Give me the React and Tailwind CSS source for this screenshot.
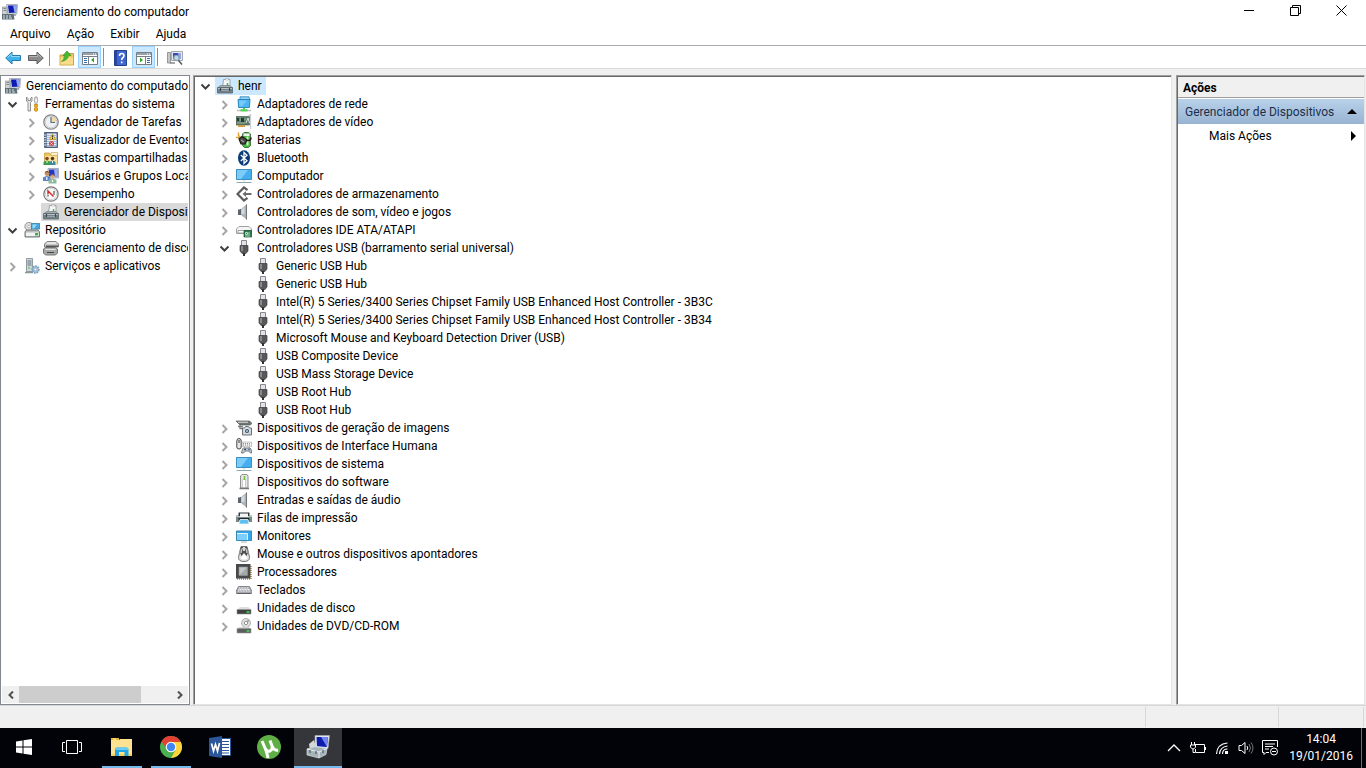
import React from 'react';
import clsx from 'clsx';

const drawings = {
  computer: (
    <>
      <path d="M4.500 .5h11l-.6 9.500L6 10.500z" fill="#d3d6dc" stroke="#8b8f98" strokeWidth=".6" />
      <path d="M6 1.500h8.500l-.5 7-7 .5z" fill="#0c1bb4" />
      <path d="M11 1.500h3.500l-.5 7-1.500.1z" fill="#93a5f4" />
      <path d="M9 10h5v2H9z" fill="#a9adb3" />
      <path d="M.5 3h4.500v8H.5z" fill="#cfd3d8" stroke="#7d848c" strokeWidth=".6" />
      <path d="M1.500 4.500h2.500M1.500 6.500h2.500" stroke="#6a7078" strokeWidth=".8" />
      <path d="M0 10h11.500l1 5.500H0z" fill="#5c7076" />
      <path d="M1 12h2m1 0h2m1 0h2M1 14h2m1 0h2m1 0h3" stroke="#d7e2e4" strokeWidth="1" />
    </>
  ),
  tools: (
    <>
      <path d="M2.500 1v4L4 6.500V15h2.500V6.500L8 5V1L6.500 2.500v2H4v-2z" fill="#e8e8e8" stroke="#777" strokeWidth=".8" />
      <path d="M11 1h2l.6 3.500-1 4h-1.200l-1-4z" fill="#f2f2f2" stroke="#888" strokeWidth=".8" />
      <path d="M10.500 8.500h3v2h-.7v1.500h.7v2.500L12 15.500l-1.500-1V12h.7v-1.500h-.7z" fill="#f7b01c" stroke="#c48608" strokeWidth=".8" />
    </>
  ),
  clock: (
    <>
      <circle cx="8" cy="8" r="7.200" fill="#eef1f3" stroke="#858585" strokeWidth="1.300" />
      <path d="M8 8V2.200A5.800 5.800 0 0 1 13.800 8z" fill="#f6d9a0" />
      <circle cx="8" cy="8" r="5.800" fill="none" stroke="#c5cbd0" strokeWidth=".9" />
      <path d="M8 3v5.500h4" fill="none" stroke="#54708c" strokeWidth="1.200" />
    </>
  ),
  events: (
    <>
      <path d="M1.500.5h13v15h-13z" fill="#5f7795" stroke="#46566d" strokeWidth=".9" />
      <path d="M4 1.500h9.500v13H4z" fill="#e3e9f5" />
      <path d="M4 3.500h9M4 5.500h9M4 7.500h9M4 9.500h9M4 11.500h9M4 13.500h9" stroke="#8fa3cc" strokeWidth=".7" />
      <path d="M.5 3h3M.5 5.500h3M.5 8h3M.5 10.500h3M.5 13h3" stroke="#d5dae0" strokeWidth="1" />
      <path d="M9.500 2l3 5.500h-6z" fill="#ffd42e" stroke="#ab8200" strokeWidth=".6" />
      <path d="M9.500 3.500v2m0 .5v1" stroke="#333" strokeWidth="1" />
      <circle cx="8.500" cy="11.500" r="2.500" fill="#d0413f" />
      <path d="M7.500 10.500l2 2m0-2l-2 2" stroke="#fff" strokeWidth=".9" />
    </>
  ),
  shared: (
    <>
      <path d="M1.500 3h5l1 1.500h7V14h-13z" fill="#efc65c" stroke="#c79c40" strokeWidth=".8" />
      <path d="M8 2.500h6.500v3H8z" fill="#fff6d8" stroke="#c79c40" strokeWidth=".6" />
      <path d="M2 6h12v8H2z" fill="#fbe29a" />
      <circle cx="4" cy="8.500" r="1.800" fill="#7d4a25" />
      <path d="M.5 15v-3q3.500-3 7 0v3z" fill="#3c9c45" />
      <circle cx="9.500" cy="8.500" r="1.800" fill="#563820" />
      <path d="M6.500 15v-3q3-3 6 0v3z" fill="#3f8d9c" />
      <path d="M4 11v2m5.500-2v2" stroke="#fff" strokeWidth="1" />
    </>
  ),
  users: (
    <>
      <path d="M5 .5h10.500v9.500H5z" fill="#d6dae4" stroke="#8990a0" strokeWidth=".7" />
      <path d="M6 1.500h8.500v7H6z" fill="#2438c0" />
      <path d="M11 1.500h3.500v7H12z" fill="#9fb0f4" />
      <circle cx="4" cy="5.500" r="2.400" fill="#c99162" />
      <path d="M1.700 5Q4 1 6.300 5L4 4z" fill="#66401d" />
      <path d="M0 13V9.500q4-3 7.500 0V13z" fill="#5784c7" />
      <circle cx="9.500" cy="8.500" r="2.200" fill="#dcae82" />
      <path d="M7.300 8q2.200-4 4.400 0l-2-1z" fill="#7b5229" />
      <path d="M5.500 15.500V12q4-2.500 8 0v3.500z" fill="#8fb8a0" />
      <path d="M3.800 9v3m5.700 0v2" stroke="#fff" strokeWidth="1.200" />
    </>
  ),
  gauge: (
    <>
      <circle cx="8" cy="8" r="7.200" fill="#fafafa" stroke="#777" strokeWidth="1.200" />
      <circle cx="8" cy="8" r="5.600" fill="none" stroke="#c4c4c4" strokeWidth=".7" />
      <path d="M5 8V5l5.500 5.500" stroke="#d22525" strokeWidth="1.400" fill="none" />
      <path d="M5 8.500v2m6-5.500v4" stroke="#333" strokeWidth="1" />
    </>
  ),
  device: (
    <>
      <path d="M6.500 1.500h6.500V9H5.500z" fill="#f5f6f6" stroke="#8d9294" strokeWidth=".8" />
      <path d="M8.500.5h3v1.500h-3z" fill="#fff" stroke="#999" strokeWidth=".5" />
      <path d="M10.500 5v3" stroke="#43b65a" strokeWidth="1.500" />
      <path d="M1 9.500L3.500 7.500h9.500L15 9.500z" fill="#a5b0b6" stroke="#737b80" strokeWidth=".7" />
      <path d="M.5 9.500h15V15H.5z" fill="#738189" stroke="#59646a" strokeWidth=".8" />
      <path d="M1 10.500h14" stroke="#b9c4ca" strokeWidth="1" />
      <path d="M3.500 10v3m9-3v3" stroke="#3d474d" strokeWidth="1.200" />
      <path d="M4 12.500h8" stroke="#99a5ab" strokeWidth="1" />
    </>
  ),
  storage: (
    <>
      <circle cx="5" cy="4.500" r="4.200" fill="#dadada" stroke="#868686" strokeWidth=".8" />
      <circle cx="5" cy="4.500" r="1.300" fill="#fff" stroke="#999" strokeWidth=".6" />
      <path d="M7.500 1.500h8.200V7H7.500z" fill="#46a9dc" stroke="#2e7da8" strokeWidth=".8" />
      <path d="M8.500 2.500H13l-3 4H8.500z" fill="#9ad9f6" />
      <path d="M1 9.500L3 8h11l1.500 1.500V15H1z" fill="#b9bdbe" stroke="#666d70" strokeWidth=".9" />
      <path d="M2 10.500h12.500v3.500H2z" fill="#f2f3f3" />
      <path d="M11 11h3v2.500h-3z" fill="#3cb43f" />
    </>
  ),
  diskManage: (
    <>
      <path d="M1.500 4L4 1.500h9L15.500 4v3h-14z" fill="#c8c8c8" stroke="#777" strokeWidth=".9" />
      <path d="M4 3h9" stroke="#fff" strokeWidth="1" />
      <path d="M3 5.500h12V7H3z" fill="#555" />
      <path d="M.5 9l2-1.500h10l2 1.500v4l-2 2h-10l-2-2z" fill="#a6a8a9" stroke="#6a6b6c" strokeWidth=".9" />
      <path d="M2.500 9.500h10" stroke="#e2e2e2" strokeWidth="1" />
      <path d="M4 12.500h7" stroke="#444" strokeWidth="1" />
    </>
  ),
  services: (
    <>
      <path d="M2.500.5h6v13h-6z" fill="#d0d7db" stroke="#87939a" strokeWidth=".9" />
      <path d="M3.500 3h4M3.500 5h4M3.500 7h4" stroke="#60757e" strokeWidth="1" />
      <path d="M4 10h2" stroke="#42b657" strokeWidth="1.200" />
      <path d="M1 14.500h8" stroke="#8a969b" strokeWidth="1.500" />
      <circle cx="11.500" cy="11.500" r="3.200" fill="#b8d4e8" stroke="#7a9fbd" strokeWidth="2" strokeDasharray="1.700 .7" />
      <circle cx="11.500" cy="11.500" r="1.300" fill="#fff" stroke="#7295b2" strokeWidth=".6" />
    </>
  ),
  network: (
    <>
      <path d="M4 .8h9l.8 3.200H4z" fill="#8fd3f8" stroke="#2a82b5" strokeWidth=".8" />
      <path d="M2 3.500h12l-.6 8H2.600z" fill="#4db5f2" stroke="#1f7fb8" strokeWidth=".9" />
      <path d="M3 4.500h8l-5 6H3.400z" fill="#74caf9" />
      <path d="M7 11.500h2v2H7z" fill="#4bc34d" />
      <path d="M1 14.500h14" stroke="#b9bec0" strokeWidth="1.500" />
      <path d="M4.500 14.300h7" stroke="#4ed64b" strokeWidth="2.200" />
    </>
  ),
  gpu: (
    <>
      <path d="M0 2.500h13.500v8.500H0z" fill="#5c7d6b" stroke="#48614f" strokeWidth=".7" />
      <path d="M1 4h2.500v3H1zM5 4h3v4H5z" fill="#203d30" />
      <path d="M10 9l2-5 1.500 5" fill="none" stroke="#d7e2da" strokeWidth="1" />
      <path d="M1 9h8M9 4v2M4 3.500v4" stroke="#a9c2aa" strokeWidth=".8" />
      <path d="M2 11h7v2H2z" fill="#d99a44" />
      <path d="M12.500 2l2-1.500V15" fill="none" stroke="#c9cdcf" strokeWidth="1.300" />
    </>
  ),
  battery: (
    <>
      <path d="M6.500 2l1.500-1.500h4.500L14.500 2v11.500l-2 2H8.500l-2-2z" fill="#44b53e" stroke="#3c6b3a" strokeWidth=".9" />
      <path d="M7.500 1.500h6V4h-6z" fill="#eef2ee" />
      <path d="M10.500 4.500h2v9h-2z" fill="#c9f5bd" />
      <path d="M2.500.5v3l2 2M0 5.500h4" fill="none" stroke="#e2a32c" strokeWidth="1.500" />
      <path d="M3 7l3-2.500 5 3.500L9 12H5z" fill="#4a4d49" stroke="#1b1d1b" strokeWidth="1.200" />
      <path d="M10 8.500h3q2-.5 2-3" fill="none" stroke="#222" strokeWidth="1.500" />
      <path d="M5 8l3 2" stroke="#b5b8b4" strokeWidth="1" />
    </>
  ),
  bluetooth: (
    <>
      <ellipse cx="8" cy="8" rx="6" ry="7.800" fill="#073c78" />
      <path d="M4.800 5l6.200 5.700L8 13.500v-11L11 5.300 4.800 11" fill="none" stroke="#fff" strokeWidth="1.300" />
    </>
  ),
  monitor: (
    <>
      <path d="M.5 1.500h15v10H.5z" fill="#45aef0" stroke="#3b8fbd" strokeWidth="1" />
      <path d="M1 2h11l-7 9H1z" fill="#7cccf9" />
      <path d="M6.500 12h3v1.500h-3z" fill="#e3e8ea" />
      <path d="M.5 14.500h15" stroke="#8ba7b5" strokeWidth="1" />
    </>
  ),
  storageCtrl: (
    <>
      <path d="M11.500 4.200L8 1.500 1.500 8 8 14.500l3.500-2.700" fill="none" stroke="#5b5b5b" strokeWidth="2.200" />
      <path d="M6.500 8L10 5v2h5.500v2H10v2z" fill="#6c6c6c" />
    </>
  ),
  speaker: (
    <>
      <path d="M2 5h3v6H2z" fill="#5d646a" />
      <path d="M5 5l6-5v16l-6-5z" fill="#aeb5ba" />
      <path d="M5.500 5.500L8.500 3v7H5.500z" fill="#d5dade" />
      <path d="M10.500.5v15" stroke="#6d757b" strokeWidth="1" />
      <path d="M2 5.500h2" stroke="#a5abb0" strokeWidth="1" />
    </>
  ),
  ide: (
    <>
      <path d="M.5 7L3 4.500h10L15.500 7v4.500H.5z" fill="#f4f4f4" stroke="#a1a1a1" strokeWidth="1" />
      <path d="M2 8.500h12V11H2z" fill="#fff" stroke="#8d8d8d" strokeWidth=".8" />
      <path d="M8 8.500h7.500V15H8z" fill="#2c7a50" stroke="#174b31" strokeWidth=".7" />
      <path d="M9.500 10.500v2h2v-2zM13 10v3M9 14h5" fill="none" stroke="#c4e6c4" strokeWidth=".9" />
    </>
  ),
  usb: (
    <>
      <path d="M5.500.5h5V6h-5z" fill="#e3e3e8" stroke="#878792" strokeWidth="1" />
      <path d="M4 5.500h8V11l-2 2.500H6L4 11z" fill="#58585a" stroke="#404043" strokeWidth=".7" />
      <path d="M5 6h2v5H5z" fill="#8b8b8d" />
      <path d="M8 13v3" stroke="#333" strokeWidth="2" />
    </>
  ),
  imaging: (
    <>
      <path d="M0 1h13.500L16 3.500 14 5H4z" fill="#6f7575" stroke="#4f5656" strokeWidth=".7" />
      <path d="M2 2.200h10" stroke="#dfe3e3" strokeWidth="1" />
      <path d="M2 6.500h5M4 5v3.500h3" fill="none" stroke="#7b8282" strokeWidth="1.300" />
      <path d="M6.500 8h2l1-1.500h3l1 1.500h2v7h-9z" fill="#cfd4d7" stroke="#4f575c" strokeWidth=".8" />
      <circle cx="11" cy="11" r="2.600" fill="#41596c" stroke="#fff" strokeWidth=".8" />
      <circle cx="11" cy="11" r="1" fill="#a8d2ea" />
    </>
  ),
  hid: (
    <>
      <path d="M.8 3q0-2.500 2.200-2.500T5.200 3v6q0 2-2.200 2T.8 9z" fill="#e7e7e7" stroke="#444" strokeWidth="1" />
      <path d="M3 2v3" stroke="#333" strokeWidth="1" />
      <path d="M6 4h9.500v4.500H6z" fill="#eee" stroke="#aaa" strokeWidth=".6" />
      <path d="M7 5.500h8M7 7h8" stroke="#777" strokeWidth=".8" strokeDasharray="1 1" />
      <path d="M5.500 15l1-4q1-2 3-1h2.500q2-1 3 1l.7 4q-1 1-3-2H9.500q-2 3-4 2z" fill="#c4cbd3" stroke="#595f65" strokeWidth=".8" />
      <path d="M8 11.500h2m-1-1v2" stroke="#333" strokeWidth=".8" />
      <circle cx="13" cy="11.500" r="1" fill="#3e72b2" />
    </>
  ),
  software: (
    <>
      <path d="M4.500 2L6 .5h5L12 2v12H4.500z" fill="#e6e6e6" stroke="#909090" strokeWidth="1" />
      <path d="M6.500 5.500v8h3v-8z" fill="#fff" stroke="#bababa" strokeWidth=".7" />
      <path d="M8.500 2v4" stroke="#6fc24a" strokeWidth="1.500" />
      <path d="M3.500 14.500h9.500" stroke="#777" strokeWidth="1.500" />
    </>
  ),
  printer: (
    <>
      <path d="M2.500 2.500h11V7h-11z" fill="#2d3438" />
      <path d="M0 5.500h2.500V7h11V5.500H16V12H0z" fill="#7d868a" />
      <path d="M0 6.500h16" stroke="#b9c1c5" strokeWidth="1" />
      <path d="M4 3.500h8V7H4z" fill="#f2f4f5" />
      <path d="M2.500 8h11v2.500h-11z" fill="#1e2b33" />
      <path d="M4 9.500h8l1 4.500H3z" fill="#5cbff0" stroke="#e8f6fd" strokeWidth=".8" />
      <path d="M13.500 8.500H15" stroke="#38c754" strokeWidth="1.200" />
    </>
  ),
  display: (
    <>
      <path d="M.5 3h15v9.500H.5z" fill="#38a6ea" stroke="#3588b5" strokeWidth="1" />
      <path d="M1 6h10v6H1z" fill="#7dcefa" />
      <path d="M1 5.500h10.500V12" fill="none" stroke="#e3f5ff" strokeWidth="1" />
      <path d="M5 14h6" stroke="#c6cdd1" strokeWidth="1.500" />
    </>
  ),
  mouse: (
    <>
      <path d="M5 .5h6l1.500 6 1 5q0 4-5.500 4t-5.500-4l1-5z" fill="#e2e2e2" stroke="#666" strokeWidth=".9" />
      <path d="M5 1h6l1 6-1.500 3-2.500-3-2.500 3L4 7z" fill="#4d4f52" />
      <path d="M6.500 2q-1.500 3-1.500 5m4.500-5q1.500 3 1.500 5" fill="none" stroke="#d0d0d0" strokeWidth="1.200" />
      <path d="M8 1v4" stroke="#fff" strokeWidth="1.500" />
      <path d="M4.500 12l3.500-4 3.500 4q-3 3.500-7 0z" fill="#fff" />
    </>
  ),
  cpu: (
    <>
      <path d="M1 15h14V2" fill="none" stroke="#d69d2f" strokeWidth="2" strokeDasharray="1 1" />
      <path d="M0 0h14.500v14.500H0z" fill="#48494b" />
      <path d="M3 3h8.500v8.500H3z" fill="#c4c6c7" stroke="#8b8d8e" strokeWidth=".6" />
      <path d="M3.500 11L11 3.500V11z" fill="#a5a8aa" />
    </>
  ),
  keyboard: (
    <>
      <path d="M2.500 4.500h11l2.500 5-1 2H1l-1-2z" fill="#a6a8b0" stroke="#7d7f85" strokeWidth=".9" />
      <path d="M3 6h10M2.500 7.500h11.500M2 9h12" stroke="#fff" strokeWidth="1" strokeDasharray="1 .6" />
      <path d="M.5 11.500h15" stroke="#5f6166" strokeWidth="1" />
    </>
  ),
  disk: (
    <>
      <path d="M1.500 9.500L4 7h8.500L15 9.500z" fill="#dedede" />
      <path d="M1 9.500h14v4.500H1z" fill="#3f4142" stroke="#999" strokeWidth=".6" />
      <path d="M10.500 12h3" stroke="#42df50" strokeWidth="1.500" />
    </>
  ),
  dvd: (
    <>
      <circle cx="10" cy="5" r="4.500" fill="#dedede" stroke="#a2a2a2" strokeWidth=".8" />
      <path d="M10 5L12 1l2 2z" fill="#aaa" />
      <circle cx="10" cy="5" r="1.700" fill="#fff" stroke="#8a8a8a" strokeWidth=".9" />
      <path d="M1 11l2.500-2h9L15 11z" fill="#d4d4d4" />
      <path d="M1 10.500h14v4.500H1z" fill="#5d5f60" stroke="#999" strokeWidth=".6" />
      <path d="M10.500 13h3" stroke="#42df50" strokeWidth="1.500" />
    </>
  ),
  back: (
    <>
      <path d="M.7 8L7 2v3.500h8.500v5H7V14z" fill="#3db3ec" stroke="#2479ae" strokeWidth="1" />
      <path d="M2.500 7.500L6.300 4v2.500H15" fill="none" stroke="#9bdcf8" strokeWidth=".9" />
    </>
  ),
  forward: (
    <>
      <path d="M15.300 8L9 2v3.500H.5v5H9V14z" fill="#8b8b8b" stroke="#5d5d5d" strokeWidth="1" />
      <path d="M1 6.500h8.700V4l3.800 3.500" fill="none" stroke="#b9b9b9" strokeWidth=".9" />
    </>
  ),
  folderUp: (
    <>
      <path d="M1 5h6l1-1.500h6.500V15H1z" fill="#edc766" stroke="#c79c3d" strokeWidth=".9" />
      <path d="M1.500 7.500h12.500v7H1.500z" fill="#f9dd8b" />
      <path d="M2.500 11.500q3-2 3-6H4L8 1l4 4.500H9.500q-1 5-7 6z" fill="#49b934" stroke="#278d18" strokeWidth=".6" />
    </>
  ),
  paneLeft: (
    <>
      <path d="M.5 2.500h15v12H.5z" fill="#fff" stroke="#777f86" strokeWidth="1" />
      <path d="M1 3h14v2H1z" fill="#9aa3aa" />
      <path d="M11 4h1m1 0h1" stroke="#fff" />
      <path d="M1 6.500h14M6.500 6v8" stroke="#777f86" strokeWidth="1" />
      <path d="M2 8.500h3M2 10.500h3M2 12.500h3" stroke="#3469a8" strokeWidth="1" />
      <path d="M12 7.500v5L9 10z" fill="#35a52d" />
    </>
  ),
  paneRight: (
    <>
      <path d="M.5 2.500h15v12H.5z" fill="#fff" stroke="#777f86" strokeWidth="1" />
      <path d="M1 3h14v2H1z" fill="#9aa3aa" />
      <path d="M11 4h1m1 0h1" stroke="#fff" />
      <path d="M1 6.500h14M9.500 6v8" stroke="#777f86" strokeWidth="1" />
      <path d="M11 8.500h3M11 10.500h3M11 12.500h3" stroke="#3469a8" strokeWidth="1" />
      <path d="M4 7.500v5L7 10z" fill="#35a52d" />
    </>
  ),
  help: (
    <>
      <path d="M1.500.5h12v15h-12z" fill="#3f66ce" stroke="#22418f" strokeWidth="1" />
      <path d="M2 1h2v14H2z" fill="#2947a0" />
      <path d="M6.500 6q0-2.500 2.200-2.500T11 5.500Q11 7 9.500 8q-.8.500-.8 2M8.700 11.500v1.800" fill="none" stroke="#fff" strokeWidth="1.600" />
    </>
  ),
  scan: (
    <>
      <path d="M4.500 1.500h11v9h-11z" fill="#e7e9ed" stroke="#99a0a9" strokeWidth=".9" />
      <path d="M6 3h8v6H6z" fill="#354abd" />
      <path d="M11 3h3v6h-2z" fill="#97a6ee" />
      <path d="M.5 2.500h3V13h-3z" fill="#c4c8cc" stroke="#777" strokeWidth=".7" />
      <path d="M3 13h5" stroke="#888" strokeWidth="1.500" />
      <circle cx="9.500" cy="8" r="2.700" fill="#b5d9f2" stroke="#8b99a3" strokeWidth="1.100" />
      <path d="M11.500 10.500l3.500 4" stroke="#555e66" strokeWidth="1.700" />
    </>
  ),
};

const Icon = ({ name }) => (
  <svg viewBox="0 0 16 16" className="size-4 shrink-0" aria-hidden="true">
    {drawings[name]}
  </svg>
);

const Chevron = ({ open }) => (
  <svg viewBox="0 0 19 18" className="h-[18px] w-[19px]" fill="none" strokeWidth="2" aria-hidden="true">
    {open ? <path d="M5.500 7.500l4 4 4-4" stroke="#404040" /> : <path d="M7.500 6l4 4-4 4" stroke="#a6a6a6" />}
  </svg>
);

const leftTree = [
  { depth: 0, icon: 'computer', label: 'Gerenciamento do computador', leaf: true },
  { depth: 0, icon: 'tools', label: 'Ferramentas do sistema', open: true },
  { depth: 1, icon: 'clock', label: 'Agendador de Tarefas' },
  { depth: 1, icon: 'events', label: 'Visualizador de Eventos' },
  { depth: 1, icon: 'shared', label: 'Pastas compartilhadas' },
  { depth: 1, icon: 'users', label: 'Usuários e Grupos Locais' },
  { depth: 1, icon: 'gauge', label: 'Desempenho' },
  { depth: 2, icon: 'device', label: 'Gerenciador de Dispositivos', leaf: true, selected: 'bg-[#d9d9d9]' },
  { depth: 0, icon: 'storage', label: 'Repositório', open: true },
  { depth: 2, icon: 'diskManage', label: 'Gerenciamento de disco', leaf: true },
  { depth: 0, icon: 'services', label: 'Serviços e aplicativos' },
];

const usbDevices = [
  'Generic USB Hub',
  'Generic USB Hub',
  'Intel(R) 5 Series/3400 Series Chipset Family USB Enhanced Host Controller - 3B3C',
  'Intel(R) 5 Series/3400 Series Chipset Family USB Enhanced Host Controller - 3B34',
  'Microsoft Mouse and Keyboard Detection Driver (USB)',
  'USB Composite Device',
  'USB Mass Storage Device',
  'USB Root Hub',
  'USB Root Hub',
];

const deviceTree = [
  { depth: 0, icon: 'device', label: 'henr', open: true, selected: 'bg-[#cce8ff]' },
  { depth: 1, icon: 'network', label: 'Adaptadores de rede' },
  { depth: 1, icon: 'gpu', label: 'Adaptadores de vídeo' },
  { depth: 1, icon: 'battery', label: 'Baterias' },
  { depth: 1, icon: 'bluetooth', label: 'Bluetooth' },
  { depth: 1, icon: 'monitor', label: 'Computador' },
  { depth: 1, icon: 'storageCtrl', label: 'Controladores de armazenamento' },
  { depth: 1, icon: 'speaker', label: 'Controladores de som, vídeo e jogos' },
  { depth: 1, icon: 'ide', label: 'Controladores IDE ATA/ATAPI' },
  { depth: 1, icon: 'usb', label: 'Controladores USB (barramento serial universal)', open: true },
  ...usbDevices.map((label) => ({ depth: 3, icon: 'usb', label, leaf: true })),
  { depth: 1, icon: 'imaging', label: 'Dispositivos de geração de imagens' },
  { depth: 1, icon: 'hid', label: 'Dispositivos de Interface Humana' },
  { depth: 1, icon: 'monitor', label: 'Dispositivos de sistema' },
  { depth: 1, icon: 'software', label: 'Dispositivos do software' },
  { depth: 1, icon: 'speaker', label: 'Entradas e saídas de áudio' },
  { depth: 1, icon: 'printer', label: 'Filas de impressão' },
  { depth: 1, icon: 'display', label: 'Monitores' },
  { depth: 1, icon: 'mouse', label: 'Mouse e outros dispositivos apontadores' },
  { depth: 1, icon: 'cpu', label: 'Processadores' },
  { depth: 1, icon: 'keyboard', label: 'Teclados' },
  { depth: 1, icon: 'disk', label: 'Unidades de disco' },
  { depth: 1, icon: 'dvd', label: 'Unidades de DVD/CD-ROM' },
];

const indents = ['', 'pl-[19px]', 'pl-[38px]', 'pl-[57px]'];

const Tree = ({ items, label }) => (
  <ul aria-label={label}>
    {items.map((item, i) => (
      <li key={i} className={clsx('flex h-[18px]', indents[item.depth])}>
        {!item.leaf && (
          <button aria-label={item.open ? 'Recolher' : 'Expandir'} className="shrink-0">
            <Chevron open={item.open} />
          </button>
        )}
        <button className={clsx('flex items-center gap-[5px] pr-1 pl-0.5 whitespace-nowrap', item.selected)}>
          <Icon name={item.icon} />
          {item.label}
        </button>
      </li>
    ))}
  </ul>
);

const TitleBar = () => (
  <header className="flex h-[23px] shrink-0 items-center gap-[5px] pl-0.5">
    <Icon name="computer" />
    <h1 className="grow">Gerenciamento do computador</h1>
    <div className="flex h-[21px] self-start pr-0.5 text-black">
      <button aria-label="Minimizar" className="flex w-[46px] items-center justify-center">
        <svg viewBox="0 0 11 11" className="size-[11px]" stroke="currentColor">
          <path d="M0 5.500h10" />
        </svg>
      </button>
      <button aria-label="Restaurar" className="flex w-[46px] items-center justify-center">
        <svg viewBox="0 0 11 11" className="size-[11px]" fill="none" stroke="currentColor">
          <path d="M.5 2.500h8v8h-8zM2.500 2.500v-2h8v8h-2" />
        </svg>
      </button>
      <button aria-label="Fechar" className="flex w-[46px] items-center justify-center">
        <svg viewBox="0 0 11 11" className="size-[11px]" stroke="currentColor">
          <path d="M.5.500l10 10m0-10l-10 10" />
        </svg>
      </button>
    </div>
  </header>
);

const MenuBar = () => (
  <nav className="flex h-[23px] shrink-0 items-center gap-4 border-b border-[#abadb3] pl-2.5">
    <button>Arquivo</button>
    <button>Ação</button>
    <button>Exibir</button>
    <button>Ajuda</button>
  </nav>
);

const ToolButton = ({ icon, label, active }) => (
  <button
    aria-label={label}
    className={clsx('flex h-[22px] w-[23px] items-end border pb-px pl-[3px]', active ? 'border-[#99d1ff] bg-[#cce8ff]' : 'border-transparent')}
  >
    <Icon name={icon} />
  </button>
);

const Divider = () => <span className="mr-[5px] ml-0.5 h-[18px] w-px bg-[#8d8d8d]" />;

const Toolbar = () => (
  <div className="flex h-[23px] shrink-0 items-center border-b border-[#d9d9d9] pl-px">
    <ToolButton icon="back" label="Voltar" />
    <ToolButton icon="forward" label="Avançar" />
    <Divider />
    <ToolButton icon="folderUp" label="Um nível acima" />
    <ToolButton icon="paneLeft" label="Mostrar árvore" active />
    <Divider />
    <ToolButton icon="help" label="Ajuda" />
    <ToolButton icon="paneRight" label="Mostrar ações" active />
    <Divider />
    <ToolButton icon="scan" label="Verificar alterações de hardware" />
  </div>
);

const panel =
  'border border-t-[#a0a0a0] border-r-[#e3e3e3] border-b-[#e3e3e3] border-l-[#a0a0a0] bg-white pt-px shadow-[inset_1px_1px_0_#696969]';

const ScrollArrow = ({ label, d }) => (
  <button aria-label={label} className="flex w-[17px] items-center justify-center">
    <svg viewBox="0 0 8 8" className="size-2" fill="none" stroke="#505050" strokeWidth="2">
      <path d={d} />
    </svg>
  </button>
);

const ConsoleTree = () => (
  <aside className="flex w-[190px] shrink-0 flex-col border border-[#828790] bg-white">
    <div className="mr-px min-h-0 grow overflow-hidden pt-px pl-0.5">
      <Tree items={leftTree} label="Console" />
    </div>
    <div className="mx-px mb-px flex h-[17px] shrink-0 bg-[#f0f0f0]">
      <ScrollArrow label="Rolar para a esquerda" d="M6 .5L2.500 4 6 7.500" />
      <div className="flex grow">
        <div className="w-4/5 bg-[#cdcdcd]" />
      </div>
      <ScrollArrow label="Rolar para a direita" d="M2 .5L5.500 4 2 7.500" />
    </div>
  </aside>
);

const ActionsPane = () => (
  <aside className={clsx('w-[189px] shrink-0 pl-px', panel)}>
    <h2 className="flex h-[21px] items-center border-b border-[#a0a0a0] bg-[#f0f0f0] pt-0.5 pl-[5px] font-bold">Ações</h2>
    <button className="mt-px flex h-[25px] w-full items-center justify-between bg-linear-to-b from-[#b9d1ea] to-[#98b4d2] pr-[7px] pl-[7px] text-[#1b2e4b]">
      Gerenciador de Dispositivos
      <svg viewBox="0 0 10 5" className="h-[5px] w-2.5 fill-black">
        <path d="M0 5l5-5 5 5z" />
      </svg>
    </button>
    <button className="flex h-6 w-full items-center justify-between pr-2 pl-[31px]">
      Mais Ações
      <svg viewBox="0 0 5 10" className="h-2.5 w-[5px] fill-black">
        <path d="M0 0l5 5-5 5z" />
      </svg>
    </button>
  </aside>
);

const StatusBar = () => (
  <footer className="flex h-[23px] shrink-0 justify-end border-t border-[#d7d7d7] py-px pr-0.5">
    <span className="w-[133px] border-l border-[#d7d7d7]" />
    <span className="w-[86px] border-x border-[#d7d7d7]" />
  </footer>
);

const apps = [
  {
    name: 'Iniciar',
    art: <path d="M4 6.500l6.500-1v6H4zM11.500 5.300L20 4v7.500h-8.500zM4 12.500h6.500v6l-6.500-1zM11.500 12.500H20V20l-8.500-1.300z" fill="#fff" />,
  },
  {
    name: 'Visão de tarefas',
    art: <path d="M5.500 5.500h11v13h-11zM4 7.500H1.500v9H4M18 7.500h2.500v9H18" fill="none" stroke="#fff" />,
  },
  {
    name: 'Explorador de Arquivos',
    open: true,
    art: (
      <>
        <path d="M1 3h8v3H1z" fill="#e8b936" />
        <path d="M1 5h8.500V4H22v17H1z" fill="#fde391" />
        <path d="M3 4h3" stroke="#fff5cf" />
        <path d="M1 19h21v2H1z" fill="#f6cd5e" />
        <path d="M5 21v-7l1.500-1.500h10.500L18.500 14v7h-4v-4h-5.500v4z" fill="#24a6e4" />
        <path d="M5.500 15v-1l1.500-1.500h10l1.500 1.500v1z" fill="#6ccbf4" />
      </>
    ),
  },
  {
    name: 'Google Chrome',
    open: true,
    art: (
      <>
        <circle cx="12" cy="12" r="11" fill="#4caf50" />
        <path d="M12 12V7h9.800A11 11 0 0 1 12 23l4.500-8z" fill="#fdd43a" />
        <path d="M2.500 6.500A11 11 0 0 1 21.800 7H12a5 5 0 0 0-4.800 6z" fill="#e34133" />
        <circle cx="12" cy="12" r="5.300" fill="#fff" />
        <circle cx="12" cy="12" r="4.200" fill="#4285f4" />
      </>
    ),
  },
  {
    name: 'Word',
    art: (
      <>
        <path d="M13 3.500h9.500v17H13z" fill="#fff" stroke="#2b579a" />
        <path d="M14 6.500h7M14 9.500h7M14 12.500h7M14 15.500h7M14 18h7" stroke="#2b579a" />
        <path d="M1 3l13-2v22L1 21z" fill="#2b579a" />
        <path d="M3.500 8.500L5.500 16l2-6.500 2 6.500 2-8" fill="none" stroke="#fff" strokeWidth="1.700" />
      </>
    ),
  },
  {
    name: 'µTorrent',
    art: (
      <>
        <circle cx="12" cy="12" r="12" fill="#5faf46" />
        <path d="M5 6l3.500 8q1.500 3 4.500 2 3-1.500 2-5L13 5.500M15 11q2 5 6 4M8.500 14q1.500 4 2.500 9" fill="none" stroke="#fff" strokeWidth="3" />
      </>
    ),
  },
  {
    name: 'Gerenciamento do computador',
    active: true,
    art: (
      <>
        <path d="M9 .5h14.500L22 13.500 9 12.500z" fill="#e4e6ed" stroke="#a5aab8" strokeWidth=".6" />
        <path d="M10.500 2H22l-1 10-10-.7z" fill="#0d1cad" />
        <path d="M15 2h7l-1 10z" fill="#6f86ee" />
        <path d="M3 9l5-4 2 7-6 3z" fill="#d5d8d9" />
        <path d="M1 14l8-2.500 12 2-1 6-7 3.500-12-3z" fill="#a6b4ba" stroke="#d9e1e4" strokeWidth=".7" />
        <path d="M1 14l12 3 8-3.500M13 17v6" fill="none" stroke="#e8eef0" />
        <path d="M4 15v3m6-2v3M17 15v3" stroke="#56646b" strokeWidth="1.300" />
      </>
    ),
  },
];

const Tray = () => (
  <div className="flex items-center text-white">
    <button aria-label="Mostrar ícones ocultos" className="flex w-6 justify-center">
      <svg viewBox="0 0 16 16" className="size-4" fill="none" stroke="currentColor">
        <path d="M2 11l6-6 6 6" strokeWidth="1.300" />
      </svg>
    </button>
    <button aria-label="Bateria" className="flex w-6 justify-center">
      <svg viewBox="0 0 16 16" className="size-4" fill="none" stroke="currentColor">
        <path d="M5 4.500h9.500v8h-9V9M15.500 7v3M1.500 2v3M4.500 2v3M.5 5h5v2q-1 2-2.500 2T.5 7zM3 9v3.500h2" />
      </svg>
    </button>
    <button aria-label="Rede sem fio" className="flex w-6 justify-center">
      <svg viewBox="0 0 16 16" className="size-4" fill="none" stroke="currentColor">
        <path d="M2.500 14Q3 4 13.500 3M5.500 14Q6 7 13.500 6M8.500 14q0-5 5-5" strokeWidth="1.200" />
        <path d="M11 11h3v3h-3z" fill="currentColor" stroke="none" />
      </svg>
    </button>
    <button aria-label="Volume" className="flex w-6 justify-center">
      <svg viewBox="0 0 16 16" className="size-4" fill="none" stroke="currentColor">
        <path d="M1 5.500h2.500L7 2.500v11l-3.500-3H1zM9 6q1.500 2 0 4" />
        <path d="M11 4q3 4 0 8M13 2.500q4 5.500 0 11" stroke="#777" />
      </svg>
    </button>
    <button aria-label="Central de ações" className="flex w-6 justify-center">
      <svg viewBox="0 0 16 16" className="size-4" fill="none" stroke="currentColor">
        <path d="M7 12.500H4l-2 2v-2H.5v-12h15V7M3 4h10M3 6.500h8M3 9h4" />
        <circle cx="12" cy="11.500" r="3.500" />
        <path d="M10 11.500h4" />
      </svg>
    </button>
    <button className="mr-2 ml-[7px] text-center leading-[17px]">
      <time dateTime="2016-01-19T14:04">
        14:04
        <br />
        19/01/2016
      </time>
    </button>
    <button aria-label="Mostrar área de trabalho" className="h-full w-[5px] border-l border-[#6d6d6d]" />
  </div>
);

const Taskbar = () => (
  <div className="flex h-10 shrink-0 justify-between bg-[#010308]">
    <div className="flex gap-px">
      {apps.map((app) => (
        <button
          key={app.name}
          aria-label={app.name}
          className={clsx('flex w-12 flex-col items-center', app.active && 'bg-[#35363a]')}
        >
          <span className="flex grow items-center">
            <svg viewBox="0 0 24 24" className="size-6">{app.art}</svg>
          </span>
          <span className={clsx('h-0.5', app.active ? 'w-full bg-[#76b9ed]' : 'w-10', app.open && 'bg-[#76b9ed]')} />
        </button>
      ))}
    </div>
    <Tray />
  </div>
);

const App = () => (
  <div className="flex h-screen flex-col bg-white font-[Roboto,'Open_Sans',sans-serif] text-[12px] leading-4 text-black">
    <TitleBar />
    <MenuBar />
    <Toolbar />
    <div className="flex min-h-0 grow flex-col bg-[#f0f0f0]">
      <div className="flex min-h-0 grow pt-1.5">
        <ConsoleTree />
        <main className={clsx('mr-1 ml-[3px] min-w-0 grow overflow-hidden pl-0.5', panel)}>
          <Tree items={deviceTree} label="Dispositivos" />
        </main>
        <ActionsPane />
        <span className="w-px shrink-0" />
      </div>
      <StatusBar />
    </div>
    <Taskbar />
  </div>
);

export default App;
